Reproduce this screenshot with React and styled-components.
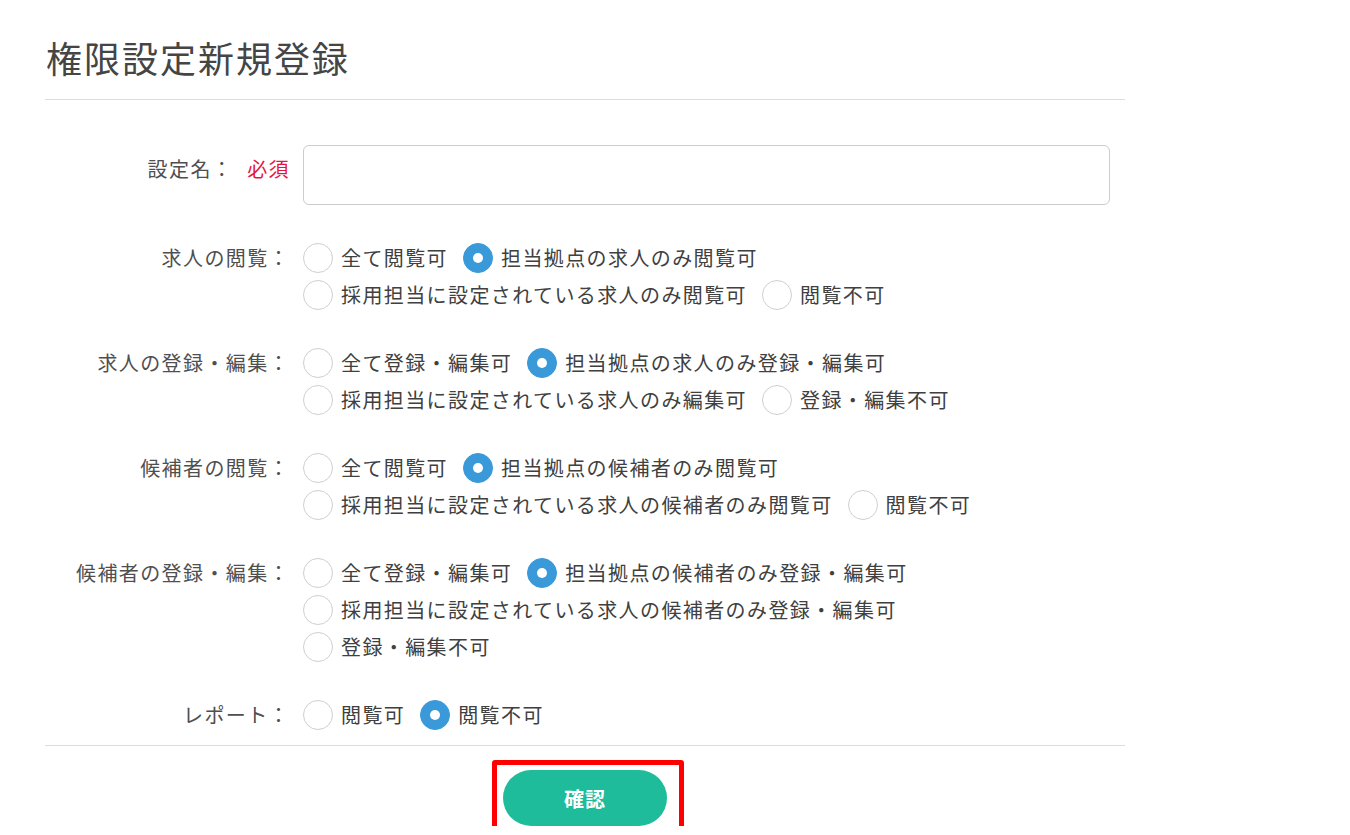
import React, { useState } from "react";
import styled, { createGlobalStyle } from "styled-components";

const GlobalStyle = createGlobalStyle`
  html, body {
    margin: 0;
    padding: 0;
    background: #ffffff;
  }
  body {
    font-family: "Noto Sans CJK JP", "Noto Sans", sans-serif;
    color: #444;
  }
  * { box-sizing: border-box; }
`;

const Page = styled.div`
  width: 1080px;
  margin-left: 45px;
`;

const Header = styled.header`
  padding-top: 32px;
  padding-bottom: 17px;
  border-bottom: 1px solid #dddddd;
`;

const Title = styled.h1`
  margin: 0 0 0 1px;
  font-size: 36px;
  font-weight: 400;
  line-height: 50px;
  letter-spacing: 0.055em;
  color: #454545;
`;

const Form = styled.form`
  display: flex;
  flex-direction: column;
  gap: 38px;
  padding: 45px 0 15px;
  border-bottom: 1px solid #dddddd;
`;

const Row = styled.div`
  display: grid;
  grid-template-columns: 245px 1fr;
  column-gap: 13px;
  align-items: start;
`;

const Label = styled.div`
  text-align: right;
  font-size: 20px;
  line-height: 30px;
  letter-spacing: 0.07em;
  color: #4f4f4f;
  white-space: nowrap;
  padding-top: ${(p) => p.$offset || 0}px;
`;

const Required = styled.span`
  color: #e5173f;
  margin-left: 14px;
`;

const TextInput = styled.input`
  width: 807px;
  height: 60px;
  border: 1px solid #cccccc;
  border-radius: 6px;
  padding: 0 14px;
  font-size: 18px;
  font-family: inherit;
  color: #444;
  outline: none;
`;

const Options = styled.div`
  display: flex;
  flex-direction: column;
  gap: 7px;
`;

const OptionLine = styled.div`
  display: flex;
  align-items: center;
`;

const Option = styled.label`
  display: flex;
  align-items: center;
  margin-right: 15px;
  cursor: pointer;
  font-size: 20px;
  line-height: 30px;
  letter-spacing: 0.07em;
  color: #404040;
  white-space: nowrap;
`;

const Radio = styled.span`
  width: 30px;
  height: 30px;
  border-radius: 50%;
  flex: none;
  margin-right: 8px;
  display: flex;
  align-items: center;
  justify-content: center;
  background: ${(p) => (p.$checked ? "#3a99d9" : "#ffffff")};
  border: 1px solid ${(p) => (p.$checked ? "#3a99d9" : "#cfcfcf")};

  &::after {
    content: "";
    display: ${(p) => (p.$checked ? "block" : "none")};
    width: 10px;
    height: 10px;
    border-radius: 50%;
    background: #ffffff;
  }
`;

const Footer = styled.div`
  display: flex;
  justify-content: center;
  padding-top: 24px;
`;

const ButtonWrap = styled.div`
  position: relative;
  width: 164px;
  height: 56px;
`;

const ConfirmButton = styled.button`
  display: block;
  width: 164px;
  height: 56px;
  border: none;
  border-radius: 28px;
  background: #1ebc9b;
  color: #ffffff;
  font-family: "Noto Sans CJK JP", sans-serif;
  font-size: 20px;
  font-weight: 700;
  letter-spacing: 0.05em;
  cursor: pointer;
`;

const Highlight = styled.span`
  position: absolute;
  left: -11px;
  top: -10px;
  width: 192px;
  height: 72px;
  border: 5px solid #ff0000;
  border-radius: 3px;
  pointer-events: none;
`;

const groups = [
  {
    key: "jobView",
    label: "求人の閲覧：",
    checked: "b",
    lines: [
      [
        { v: "a", t: "全て閲覧可" },
        { v: "b", t: "担当拠点の求人のみ閲覧可" },
      ],
      [
        { v: "c", t: "採用担当に設定されている求人のみ閲覧可" },
        { v: "d", t: "閲覧不可" },
      ],
    ],
  },
  {
    key: "jobEdit",
    label: "求人の登録・編集：",
    checked: "b",
    lines: [
      [
        { v: "a", t: "全て登録・編集可" },
        { v: "b", t: "担当拠点の求人のみ登録・編集可" },
      ],
      [
        { v: "c", t: "採用担当に設定されている求人のみ編集可" },
        { v: "d", t: "登録・編集不可" },
      ],
    ],
  },
  {
    key: "candView",
    label: "候補者の閲覧：",
    checked: "b",
    lines: [
      [
        { v: "a", t: "全て閲覧可" },
        { v: "b", t: "担当拠点の候補者のみ閲覧可" },
      ],
      [
        { v: "c", t: "採用担当に設定されている求人の候補者のみ閲覧可" },
        { v: "d", t: "閲覧不可" },
      ],
    ],
  },
  {
    key: "candEdit",
    label: "候補者の登録・編集：",
    checked: "b",
    lines: [
      [
        { v: "a", t: "全て登録・編集可" },
        { v: "b", t: "担当拠点の候補者のみ登録・編集可" },
      ],
      [{ v: "c", t: "採用担当に設定されている求人の候補者のみ登録・編集可" }],
      [{ v: "d", t: "登録・編集不可" }],
    ],
  },
  {
    key: "report",
    label: "レポート：",
    checked: "b",
    lines: [
      [
        { v: "a", t: "閲覧可" },
        { v: "b", t: "閲覧不可" },
      ],
    ],
  },
];

export default function App() {
  const [values, setValues] = useState(
    Object.fromEntries(groups.map((g) => [g.key, g.checked]))
  );
  const [name, setName] = useState("");

  return (
    <>
      <GlobalStyle />
      <Page>
        <Header>
          <Title>権限設定新規登録</Title>
        </Header>
        <Form onSubmit={(e) => e.preventDefault()}>
          <Row>
            <Label $offset={9}>
              設定名：<Required>必須</Required>
            </Label>
            <TextInput value={name} onChange={(e) => setName(e.target.value)} />
          </Row>
          {groups.map((g) => (
            <Row key={g.key}>
              <Label>{g.label}</Label>
              <Options>
                {g.lines.map((line, i) => (
                  <OptionLine key={i}>
                    {line.map((o) => (
                      <Option
                        key={o.v}
                        onClick={() => setValues((s) => ({ ...s, [g.key]: o.v }))}
                      >
                        <Radio $checked={values[g.key] === o.v} />
                        {o.t}
                      </Option>
                    ))}
                  </OptionLine>
                ))}
              </Options>
            </Row>
          ))}
        </Form>
        <Footer>
          <ButtonWrap>
            <ConfirmButton type="button">確認</ConfirmButton>
            <Highlight />
          </ButtonWrap>
        </Footer>
      </Page>
    </>
  );
}
